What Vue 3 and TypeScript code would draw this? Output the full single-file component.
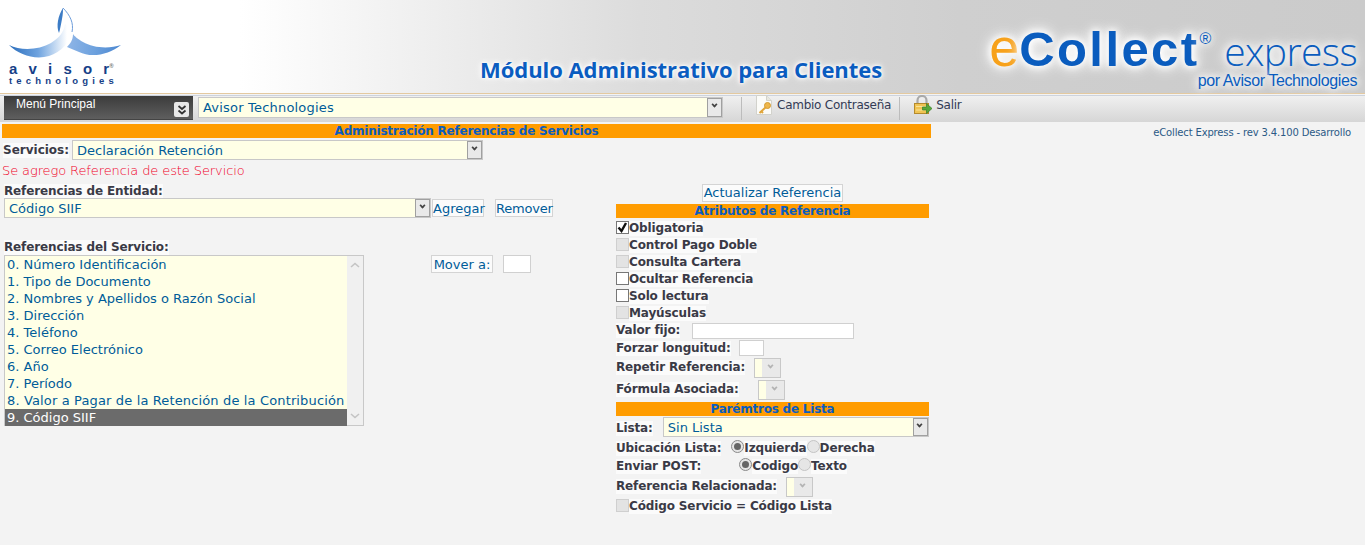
<script setup lang="ts">
const refs: string[] = [
  '0. Número Identificación',
  '1. Tipo de Documento',
  '2. Nombres y Apellidos o Razón Social',
  '3. Dirección',
  '4. Teléfono',
  '5. Correo Electrónico',
  '6. Año',
  '7. Período',
  '8. Valor a Pagar de la Retención de la Contribución',
  '9. Código SIIF',
]
interface Check { label: string; state: 'on' | 'off' | 'dis' }
const checks: Check[] = [
  { label: 'Obligatoria', state: 'on' },
  { label: 'Control Pago Doble', state: 'dis' },
  { label: 'Consulta Cartera', state: 'dis' },
  { label: 'Ocultar Referencia', state: 'off' },
  { label: 'Solo lectura', state: 'off' },
  { label: 'Mayúsculas', state: 'dis' },
]
</script>

<template>
  <div class="page">
    <header class="head">
      <div class="avisor">
        <svg class="swoosh" width="114" height="58" viewBox="8 7 114 58">
          <defs>
            <linearGradient id="sl" gradientUnits="userSpaceOnUse" x1="8" y1="45" x2="66" y2="45">
              <stop offset="0" stop-color="#2a6dbc" />
              <stop offset="0.5" stop-color="#6ea3df" />
              <stop offset="1" stop-color="#ffffff" />
            </linearGradient>
            <linearGradient id="sr" gradientUnits="userSpaceOnUse" x1="68" y1="40" x2="120" y2="50">
              <stop offset="0" stop-color="#8db4e6" />
              <stop offset="0.5" stop-color="#6ea2de" />
              <stop offset="1" stop-color="#4a86d0" />
            </linearGradient>
          </defs>
          <path d="M120 45C108 49 92 48 82 42C77 39 73 36 72 34C72 40 69 44 66 47C70 49 74 50 78 52C90 58 108 55 120 45Z" fill="url(#sr)" />
          <path d="M8 45C20 51 38 50 50 43C58 38 63 32 64 24L72 30C70 42 60 52 48 56C34 60 18 55 8 45Z" fill="url(#sl)" />
          <path d="M62 8C57 16 55 26 58 33C59 30 60 24 61 19C62 14 62 10 62 8Z" fill="#3c7cc6" />
          <path d="M62 8C69 15 73 23 71 32" fill="none" stroke="#6d9ddb" stroke-width="1" />
        </svg>
        <div class="av-name"><span class="av-ls">aviso</span>r<sup>®</sup></div>
        <div class="av-tech">technologies</div>
      </div>
      <h1 class="title">Módulo Administrativo para Clientes</h1>
      <div class="ecollect">
        <div class="ec-main"><span class="ec-e">e</span><b>Collect</b><sup>®</sup><span class="ec-x">express</span></div>
        <div class="ec-by">por Avisor Technologies</div>
      </div>
    </header>

    <nav class="bar">
      <div class="menu">
        <span>Menú Principal</span>
        <span class="menu-btn">
          <svg width="12" height="12" viewBox="0 0 12 12"><path d="M2.5 2l3.5 3 3.5-3M2.5 6.5l3.5 3 3.5-3" fill="none" stroke="#333" stroke-width="1.8" /></svg>
        </span>
      </div>
      <div class="sel top-sel"><span>Avisor Technologies</span><i class="arrow"></i></div>
      <span class="sep first"></span>
      <a class="tool">
        <svg width="18" height="20" viewBox="0 0 18 20">
          <path d="M1.5 .5h10l5 5v14h-15z" fill="#fbfbf8" stroke="#d2d2cc" />
          <path d="M11.5 .5v5h5" fill="#e8e8e0" stroke="#d2d2cc" />
          <circle cx="12.5" cy="10.5" r="3" fill="#eeb64a" stroke="#d39a30" />
          <path d="M10.5 12.5L4.5 18M6.5 16.5l1.5 1.5" stroke="#e0a53a" stroke-width="2" fill="none" />
        </svg>
        Cambio Contraseña
      </a>
      <span class="sep"></span>
      <a class="tool">
        <svg width="20" height="20" viewBox="0 0 20 20">
          <path d="M4.5 9V5.5a4.5 4.5 0 019 0V9" fill="none" stroke="#a9a9a9" stroke-width="2.2" />
          <rect x="1.5" y="8.5" width="14" height="10" fill="#f0c453" stroke="#b58a2c" />
          <path d="M3 11.5h11M3 15h11" stroke="#fbe39a" />
          <path d="M9.5 12h4V8.500l5.500 5-5.500 5V15h-4z" fill="#58a83a" stroke="#3a7d25" stroke-width=".7" />
        </svg>
        Salir
      </a>
    </nav>

    <main class="main">
      <section class="panel">
        <div class="band">Administración Referencias de Servicios</div>
        <div class="serv-row">
          <label class="lb lb-serv">Servicios:</label>
          <div class="sel serv-sel"><span>Declaración Retención</span><i class="arrow"></i></div>
        </div>
        <p class="msg">Se agrego Referencia de este Servicio</p>

        <div class="cols">
          <div class="left">
            <label class="lb lb-block lb-ent">Referencias de Entidad:</label>
            <div class="ent-row">
              <div class="sel ent-sel"><span>Código SIIF</span><i class="arrow"></i></div>
              <button class="btn add">Agregar</button>
              <button class="btn rem">Remover</button>
            </div>
            <label class="lb lb-block lb-serv-ref">Referencias del Servicio:</label>
            <div class="list-row">
              <div class="list">
                <ul>
                  <li v-for="(r, i) in refs" :key="r" :class="{ picked: i === 9, wide: i === 8 }">{{ r }}</li>
                </ul>
                <div class="scroll">
                  <svg width="10" height="6" viewBox="0 0 10 6"><path d="M1 5l4-3.500L9 5" fill="none" stroke="#c4c4c4" stroke-width="1.6" /></svg>
                  <svg width="10" height="6" viewBox="0 0 10 6"><path d="M1 1l4 3.500L9 1" fill="none" stroke="#c4c4c4" stroke-width="1.6" /></svg>
                </div>
              </div>
              <button class="btn move">Mover a:</button>
              <input class="inp move-inp" type="text" />
            </div>
          </div>

          <div class="right">
            <div class="upd-wrap"><button class="btn upd">Actualizar Referencia</button></div>
            <div class="band sub first-sub">Atributos de Referencia</div>
            <div v-for="c in checks" :key="c.label" class="chk-row">
              <span class="box" :class="c.state">
                <svg v-if="c.state === 'on'" width="11" height="11" viewBox="0 0 11 11"><path d="M1.500 5.500l3 3.500 4.500-8" fill="none" stroke="#111" stroke-width="2.4" /></svg>
              </span>
              <span class="lb">{{ c.label }}</span>
            </div>
            <div class="fld-row valor">
              <span class="lb">Valor fijo:</span>
              <input class="inp v-inp" type="text" />
            </div>
            <div class="fld-row forzar">
              <span class="lb">Forzar longuitud:</span>
              <input class="inp f-inp" type="text" />
            </div>
            <div class="fld-row rep">
              <span class="lb">Repetir Referencia:</span>
              <div class="mini"><i class="arrow off"></i></div>
            </div>
            <div class="fld-row form">
              <span class="lb">Fórmula Asociada:</span>
              <div class="mini"><i class="arrow off"></i></div>
            </div>
            <div class="band sub">Parémtros de Lista</div>
            <div class="fld-row lista">
              <span class="lb">Lista:</span>
              <div class="sel lista-sel"><span>Sin Lista</span><i class="arrow"></i></div>
            </div>
            <div class="radio-row ubi">
              <span class="lb rl">Ubicación Lista:</span>
              <span class="radio on"></span><span class="lb">Izquierda</span>
              <span class="radio"></span><span class="lb">Derecha</span>
            </div>
            <div class="radio-row post">
              <span class="lb rl">Enviar POST:</span>
              <span class="radio on"></span><span class="lb">Codigo</span>
              <span class="radio"></span><span class="lb">Texto</span>
            </div>
            <div class="fld-row relac">
              <span class="lb">Referencia Relacionada:</span>
              <div class="mini"><i class="arrow off"></i></div>
            </div>
            <div class="chk-row">
              <span class="box dis"></span>
              <span class="lb">Código Servicio = Código Lista</span>
            </div>
          </div>
        </div>
      </section>
      <div class="rev">eCollect Express - rev 3.4.100 Desarrollo</div>
    </main>
  </div>
</template>

<style>
html, body { margin: 0; background: #f3f3f3; }
</style>

<style scoped>
.page { width: 1365px; height: 545px; overflow: hidden; background: #f3f3f3; font-family: "DejaVu Sans", Verdana, sans-serif; font-size: 13px; color: #005c99; }

.head { height: 93px; display: flex; position: relative; background: linear-gradient(90deg, #fff 0, #fff 240px, #dcdcdc 640px, #cfcfcf 960px, #cbcbcb 100%); border-bottom: 1px solid #e3c9a0; }
.avisor { width: 124px; padding: 7px 0 0 9px; box-sizing: border-box; color: #163f88; flex: none; }
.swoosh { display: block; }
.av-name { font: 700 15px/15px "Liberation Sans", sans-serif; margin-top: -4px; white-space: nowrap; }
.av-ls { letter-spacing: 11.2px; }
.av-name sup { font-size: 6px; vertical-align: 6px; line-height: 0; color: #777; }
.av-tech { font: 700 9.5px/10px "Liberation Sans", sans-serif; letter-spacing: 4.2px; white-space: nowrap; }
.title { position: absolute; left: 480px; top: 55px; margin: 0; font: 700 22px/28px "Open Sans", sans-serif; color: #0a5cc0; letter-spacing: -0.05px; white-space: nowrap; text-shadow: 0 0 3px #fff, 0 0 5px #fff, 0 0 8px #fff; }
.ecollect { position: absolute; right: 8px; top: 23px; text-align: right; color: #0a5cbe; text-shadow: 0 0 6px #fff, 0 0 10px #fff, 0 0 14px #fff, 0 0 18px #fff; }
.ec-main { font: 400 49px/52px "Liberation Sans", sans-serif; white-space: nowrap; }
.ec-e { color: #f7a11a; font-size: 54px; line-height: 0; }
.ec-main b { font-weight: 700; letter-spacing: 2.4px; }
.ec-main sup { font-size: 16px; line-height: 0; vertical-align: 22px; font-weight: 400; }
.ec-x { font: 300 39px/0 "Open Sans", sans-serif; margin-left: 13px; letter-spacing: -0.6px; }
.ec-by { font: 400 16px/18px "Liberation Sans", sans-serif; margin-top: -3px; letter-spacing: -0.4px; }

.bar { height: 27px; margin-top: 1px; display: flex; align-items: center; background: linear-gradient(#f0f0f0, #d6d6d6); border-top: 1px solid #cdd3dd; box-sizing: border-box; }
.menu { width: 189px; height: 24px; margin: 0 0 2px 4px; box-sizing: border-box; flex: none; display: flex; justify-content: space-between; background: linear-gradient(#3c3c3c, #5e5e5e); color: #fff; font: 12px/16px "Liberation Sans", sans-serif; padding: 0 4px 0 12px; border-bottom: 1px solid #444; }
.menu-btn { width: 15px; height: 15px; margin-top: 6px; border-radius: 2px; background: #e8e8e8; display: flex; align-items: center; justify-content: center; }
.sel { box-sizing: border-box; background: #ffffe6; border: 1px solid #c8c8c8; display: flex; align-items: center; justify-content: space-between; color: #005c99; font-size: 13px; padding: 0 0 0 4px; white-space: nowrap; }
.arrow { display: block; width: 15px; height: 100%; box-sizing: border-box; flex: none; background: #e9e9e9; border: 1px solid #a0a0a0; position: relative; }
.arrow::after { content: ""; position: absolute; left: 3.5px; top: 50%; margin-top: -5px; width: 5px; height: 5px; border: solid #444; border-width: 0 2px 2px 0; transform: rotate(45deg) scale(.85); box-sizing: border-box; }
.arrow.off { border: 0; width: 18px; }
.arrow.off::after { border-color: #b4b4b4; left: 6px; }
.top-sel { width: 525px; height: 21px; margin: 0 0 4px 5px; flex: none; letter-spacing: .2px; }
.sep { width: 1px; height: 23px; background: #bcbcbc; margin: 0 13px 2px 8px; flex: none; }
.sep.first { margin-left: 18px; }
.tool { display: flex; align-items: center; gap: 4px; padding-bottom: 8px; font: 12px/16px "DejaVu Sans", sans-serif; color: #333b55; letter-spacing: -0.25px; white-space: nowrap; }
.tool + .sep + .tool { gap: 3px; }

.main { display: flex; align-items: flex-start; }
.panel { width: 929px; margin: 2px 0 0 2px; flex: none; }
.band { height: 14px; line-height: 15px; background: #ff9c00; color: #0a5cc0; font-weight: 700; font-size: 12px; letter-spacing: -0.22px; text-align: center; }
.lb { font-weight: 700; font-size: 12px; letter-spacing: -0.13px; color: #3a3a46; background: #fbfbfb; white-space: nowrap; line-height: 15px; }
.serv-row { display: flex; align-items: center; height: 20px; margin-top: 2px; }
.lb-serv { margin-left: 1px; margin-right: 3px; letter-spacing: 0; }
.serv-sel { width: 411px; height: 20px; }
.msg { margin: 2px 0 0; color: #f00028; font-size: 13px; line-height: 17px; font-weight: 300; letter-spacing: -0.1px; }
.cols { display: flex; align-items: flex-start; margin-top: 3px; }
.left { width: 614px; flex: none; }
.lb-block { display: inline-block; margin-left: 2px; }
.lb-ent { margin-top: 2px; }
.ent-row { display: flex; align-items: center; height: 20px; margin: -1px 0 0 2px; }
.ent-sel { width: 427px; height: 20px; }
.btn { padding: 0; margin: 0; background: #fbfbfb; border: 1px solid #d4d4d4; color: #005c99; font: 13px/15px "DejaVu Sans", sans-serif; box-sizing: border-box; white-space: nowrap; }
.add { width: 52px; height: 18px; margin-left: 1px; }
.rem { width: 58px; height: 18px; margin-left: 11px; letter-spacing: -0.2px; }
.lb-serv-ref { margin-top: 22px; }
.list-row { display: flex; align-items: flex-start; margin: 0 0 0 2px; }
.list { height: 171px; width: 360px; box-sizing: border-box; display: flex; flex: none; background: #f0f0f0; border: 1px solid #c8c8c8; }
.list ul { list-style: none; margin: 0; padding: 0; width: 342px; flex: none; background: #ffffe6; }
.list li { height: 17px; line-height: 17px; padding-left: 2px; white-space: nowrap; }
.list li.wide { letter-spacing: .14px; }
.list li.picked { background: #6b6b6b; color: #fff; }
.scroll { flex: 1; display: flex; flex-direction: column; justify-content: space-between; align-items: center; padding: 6px 0; }
.move { margin-left: 67px; width: 62px; height: 18px; }
.inp { box-sizing: border-box; background: #fff; border: 1px solid #d0d0d0; padding: 0; margin: 0; display: block; outline: none; }
.move-inp { width: 28px; height: 18px; margin-left: 10px; }

.right { width: 313px; flex: none; color: #3a3a46; }
.upd-wrap { display: flex; justify-content: center; margin-top: 2px; height: 18px; }
.upd { width: 141px; height: 18px; padding-bottom: 2px; }
.band.sub { margin-top: 1px; }
.band.first-sub { margin: 2px 0; }
.chk-row { display: flex; align-items: center; height: 17px; }
.box { width: 13px; height: 13px; border: 1px solid #777; background: #fff; box-sizing: border-box; display: block; flex: none; margin-top: -2px; }
.box.on svg { display: block; }
.box.dis { background: #e3e3e3; border-color: #cfcfcf; }
.fld-row { display: flex; align-items: center; }
.valor { height: 17px; }
.v-inp { width: 162px; height: 16px; margin-left: 12px; }
.forzar { height: 18px; }
.f-inp { width: 25px; height: 16px; margin-left: 8px; }
.rep { height: 21px; }
.form { height: 23px; }
.relac { height: 23px; }
.mini { width: 27px; height: 20px; box-sizing: border-box; border: 1px solid #c8c8c8; background: linear-gradient(90deg, #ffffe6 0, #ffffe6 8px, #e8e8e8 8px); display: flex; justify-content: flex-end; margin-left: 9px; }
.form .mini { margin-left: 19px; }
.lista { height: 24px; }
.lista-sel { width: 266px; height: 20px; margin: -2px 0 0 10px; }
.radio-row { display: flex; align-items: center; height: 18px; }
.ubi { height: 17px; }
.rl { margin-right: 10px; }
.post .rl { margin-right: 38px; }
.radio { width: 13px; height: 13px; box-sizing: border-box; border-radius: 50%; border: 1px solid #c4c4c4; background: #e6e6e6; flex: none; margin-top: -4px; position: relative; }
.radio.on { border-color: #8a8a8a; }
.radio.on::after { content: ""; position: absolute; inset: 2px; border-radius: 50%; background: #666; }

.rev { flex: 1; text-align: right; padding: 4px 14px 0 0; font: 10px/14px "DejaVu Sans", sans-serif; color: #2b5a86; white-space: nowrap; letter-spacing: -0.15px; }
</style>
